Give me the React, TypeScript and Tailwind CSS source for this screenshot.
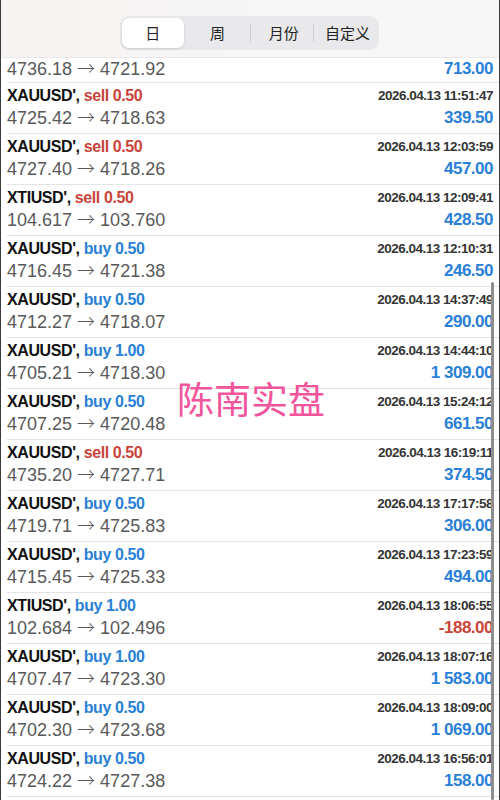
import React from 'react';

type Trade = {
    symbol: string;
    side: 'buy' | 'sell';
    lots: string;
    time: string;
    open: string;
    close: string;
    profit: string;
};

const trades: Trade[] = [
    { symbol: "XAUUSD'", side: 'sell', lots: '0.50', time: '2026.04.13 11:51:47', open: '4725.42', close: '4718.63', profit: '339.50' },
    { symbol: "XAUUSD'", side: 'sell', lots: '0.50', time: '2026.04.13 12:03:59', open: '4727.40', close: '4718.26', profit: '457.00' },
    { symbol: "XTIUSD'", side: 'sell', lots: '0.50', time: '2026.04.13 12:09:41', open: '104.617', close: '103.760', profit: '428.50' },
    { symbol: "XAUUSD'", side: 'buy', lots: '0.50', time: '2026.04.13 12:10:31', open: '4716.45', close: '4721.38', profit: '246.50' },
    { symbol: "XAUUSD'", side: 'buy', lots: '0.50', time: '2026.04.13 14:37:49', open: '4712.27', close: '4718.07', profit: '290.00' },
    { symbol: "XAUUSD'", side: 'buy', lots: '1.00', time: '2026.04.13 14:44:10', open: '4705.21', close: '4718.30', profit: '1 309.00' },
    { symbol: "XAUUSD'", side: 'buy', lots: '0.50', time: '2026.04.13 15:24:12', open: '4707.25', close: '4720.48', profit: '661.50' },
    { symbol: "XAUUSD'", side: 'sell', lots: '0.50', time: '2026.04.13 16:19:11', open: '4735.20', close: '4727.71', profit: '374.50' },
    { symbol: "XAUUSD'", side: 'buy', lots: '0.50', time: '2026.04.13 17:17:58', open: '4719.71', close: '4725.83', profit: '306.00' },
    { symbol: "XAUUSD'", side: 'buy', lots: '0.50', time: '2026.04.13 17:23:59', open: '4715.45', close: '4725.33', profit: '494.00' },
    { symbol: "XTIUSD'", side: 'buy', lots: '1.00', time: '2026.04.13 18:06:55', open: '102.684', close: '102.496', profit: '-188.00' },
    { symbol: "XAUUSD'", side: 'buy', lots: '1.00', time: '2026.04.13 18:07:16', open: '4707.47', close: '4723.30', profit: '1 583.00' },
    { symbol: "XAUUSD'", side: 'buy', lots: '0.50', time: '2026.04.13 18:09:00', open: '4702.30', close: '4723.68', profit: '1 069.00' },
    { symbol: "XAUUSD'", side: 'buy', lots: '0.50', time: '2026.04.13 16:56:01', open: '4724.22', close: '4727.38', profit: '158.00' },
];

const tabs = ['日', '周', '月份', '自定义'];

const Prices: React.FC<{ open: string; close: string }> = ({ open, close }) => (
    <span className="text-[18px] text-[#595959] leading-[22px] whitespace-nowrap">
        {open}{' '}
        <span className="inline-block leading-none font-light" style={{ fontFamily: '"Noto Sans CJK SC", sans-serif' }}>→</span>
        {' '}{close}
    </span>
);

const TradeRow: React.FC<{ t: Trade }> = ({ t }) => {
    const loss = t.profit.startsWith('-');
    return (
        <div className="h-[51px] flex flex-col border-b border-[#e4e4e4] ml-[6px] pr-[6px]">
            <div className="flex items-center justify-between h-[18px] mt-[4px]">
                <span className="text-[16px] font-bold text-[#111] leading-[18px] tracking-[-0.4px]">
                    {t.symbol},{' '}
                    <span className={t.side === 'sell' ? 'text-[#c9443a]' : 'text-[#2a80d6]'}>
                        {t.side} {t.lots}
                    </span>
                </span>
                <span className="text-[13.5px] font-bold text-[#353535] leading-[18px] tracking-[-0.5px]">{t.time}</span>
            </div>
            <div className="flex items-center justify-between h-[22px] mt-[2px]">
                <Prices open={t.open} close={t.close} />
                <span className={`text-[17px] font-bold leading-[22px] tracking-[-0.5px] ${loss ? 'text-[#c9443a]' : 'text-[#2a80d6]'}`}>
                    {t.profit}
                </span>
            </div>
        </div>
    );
};

export default function App() {
    return (
        <div
            className="relative w-[500px] h-[800px] overflow-hidden bg-white border-x border-[#3c3c3c]"
            style={{ fontFamily: '"Liberation Sans", Arial, "Noto Sans CJK SC", sans-serif' }}
        >
            <div className="h-[58px] bg-gradient-to-r from-[#f8f2f2] via-[#f6f6f6] to-[#f7f7f7] border-b border-[#e8e8e8] flex items-start justify-center pt-[16px]">
                <div className="flex w-[259px] h-[34px] bg-[#e9e9eb] rounded-[9px] p-[2px] -ml-[1px]">
                    {tabs.map((tab, i) => (
                        <div key={tab} className="flex-1 flex items-center">
                            {i > 1 && <div className="w-px h-[18px] bg-[#cfcfd2]" />}
                            <div
                                className={`flex-1 h-full flex items-center justify-center text-[15px] text-[#222] ${i === 0 ? 'bg-white rounded-[7px] shadow-[0_1px_3px_rgba(0,0,0,0.12)] mr-[2px]' : ''} ${i > 1 ? 'pl-[4px]' : ''}`}
                                style={{ fontFamily: '"Noto Sans CJK SC", sans-serif' }}
                            >
                                {tab}
                            </div>
                        </div>
                    ))}
                </div>
            </div>

            <div className="h-[25px] border-b border-[#e4e4e4] ml-[6px] pr-[6px] flex items-start justify-between">
                <Prices open="4736.18" close="4721.92" />
                <span className="text-[17px] font-bold text-[#2a80d6] leading-[22px] tracking-[-0.5px]">713.00</span>
            </div>

            {trades.map((t, i) => (
                <TradeRow key={i} t={t} />
            ))}

            <div
                className="absolute left-[176px] top-[380px] text-[37px] text-[#f2559c] leading-none pointer-events-none"
                style={{ fontFamily: '"Noto Sans CJK SC", sans-serif' }}
            >
                陈南实盘
            </div>

            <div className="absolute right-[5px] top-[282px] bottom-0 w-[3px] bg-[#8e8e8e] rounded-full" />
        </div>
    );
}
